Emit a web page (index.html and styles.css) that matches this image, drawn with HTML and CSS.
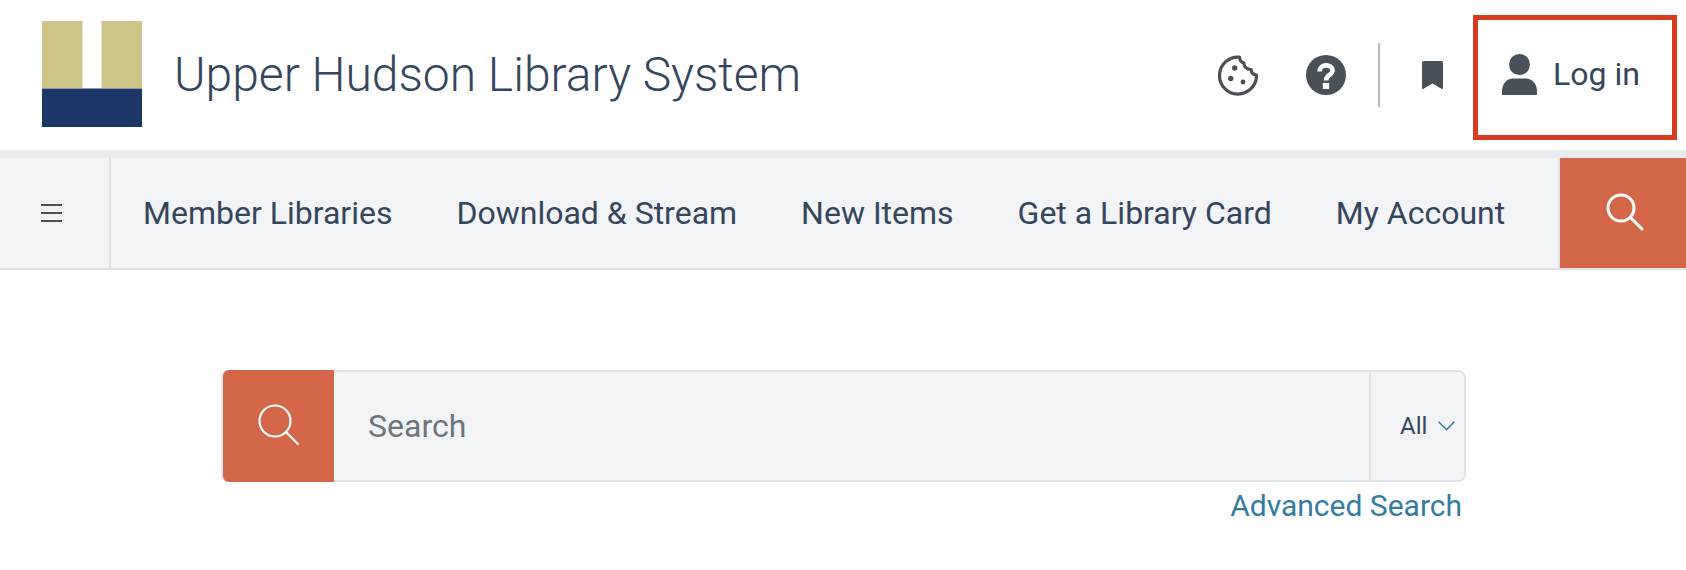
FILE: index.html
```html
<!DOCTYPE html>
<html lang="en">
<head>
    <meta charset="UTF-8">
    <meta name="viewport" content="width=device-width, initial-scale=1.0">
    <title>Upper Hudson Library System</title>
    <link rel="stylesheet" href="styles.css">
</head>
<body>
    <header class="site-header">
        <a class="brand" href="#">
            <svg class="brand-logo" viewBox="0 0 100 106" width="100" height="106" aria-hidden="true">
                <rect width="100" height="68" fill="#cdc589"/>
                <rect x="40" width="20" height="68" fill="#e6e2c4"/>
                <rect x="41" width="18" height="68" fill="#fff"/>
                <rect y="67" width="100" height="1" fill="#8f97a3"/>
                <rect y="68" width="100" height="38" fill="#1a3768"/>
            </svg>
            <span class="brand-name">Upper Hudson Library System</span>
        </a>
        <div class="header-tools">
            <a class="tool tool-cookie" href="#" aria-label="Cookies">
                <svg viewBox="0 0 40 41" width="40" height="41" aria-hidden="true">
                    <path d="M21.500 2.100A18.500 18.500 0 1 0 38.500 20C35.500 20 33.500 18 33 14.500C28.500 14.500 25.500 11 26 8C23.500 7.500 21.500 5 21.500 2.100Z" fill="none" stroke="#495057" stroke-width="3.200" stroke-linejoin="round"/>
                    <circle cx="16.700" cy="13" r="2.700" fill="#495057"/>
                    <circle cx="12.700" cy="23.500" r="2.700" fill="#495057"/>
                    <circle cx="25" cy="27" r="2.400" fill="#495057"/>
                </svg>
            </a>
            <a class="tool tool-help" href="#" aria-label="Help">
                <svg viewBox="0 0 40 40" width="40" height="40" aria-hidden="true">
                    <circle cx="20" cy="20" r="20" fill="#495057"/>
                    <path d="M13.500 16.500C13.500 8.500 26.500 8.500 26.500 15.500C26.500 20 20 20 20 25.500" fill="none" stroke="#fff" stroke-width="4.600"/>
                    <rect x="16.800" y="28" width="6.400" height="6" fill="#fff"/>
                </svg>
            </a>
            <span class="tool-divider"></span>
            <a class="tool tool-bookmark" href="#" aria-label="Saved items">
                <svg viewBox="0 0 21 28" width="21" height="28" aria-hidden="true">
                    <path d="M2 0H19A2 2 0 0 1 21 2V27Q21 28.500 19.500 27.700L10.500 22.500L1.500 27.700Q0 28.500 0 27V2A2 2 0 0 1 2 0Z" fill="#495057"/>
                </svg>
            </a>
            <a class="login" href="#">
                <svg viewBox="0 0 35 41" width="35" height="41" aria-hidden="true">
                    <circle cx="17.500" cy="10.500" r="10.500" fill="#495057"/>
                    <path d="M0 41V37C0 29 6 24.500 11 24.500H24C29 24.500 35 29 35 37V41Z" fill="#495057"/>
                </svg>
                <span>Log in</span>
            </a>
        </div>
    </header>

    <nav class="main-nav">
        <button class="nav-toggle" aria-label="Menu">
            <span></span><span></span><span></span>
        </button>
        <ul class="nav-links">
            <li><a href="#">Member Libraries</a></li>
            <li><a href="#">Download &amp; Stream</a></li>
            <li><a href="#">New Items</a></li>
            <li><a href="#">Get a Library Card</a></li>
            <li><a href="#">My Account</a></li>
        </ul>
        <button class="nav-search" aria-label="Search">
            <svg viewBox="0 0 40 40" width="40" height="40" aria-hidden="true">
                <circle cx="15" cy="15" r="13" fill="none" stroke="#fff" stroke-width="3"/>
                <path d="M24.500 24.500L36 36" stroke="#fff" stroke-width="3" stroke-linecap="round"/>
            </svg>
        </button>
    </nav>

    <section class="search-area">
        <form class="search-box">
            <button class="search-submit" type="button" aria-label="Search">
                <svg viewBox="0 0 44 44" width="44" height="44" aria-hidden="true">
                    <circle cx="17" cy="17" r="15.500" fill="none" stroke="#fff" stroke-width="2.200"/>
                    <path d="M28 28L40 40" stroke="#fff" stroke-width="2.200" stroke-linecap="round"/>
                </svg>
            </button>
            <input class="search-input" type="text" placeholder="Search">
            <div class="search-scope">
                <span>All</span>
                <svg viewBox="0 0 17 10" width="17" height="10" aria-hidden="true">
                    <path d="M0.700 0.700L8.500 8.700L16.300 0.700" fill="none" stroke="#337c9f" stroke-width="1.500"/>
                </svg>
            </div>
        </form>
        <div class="search-extra">
            <a href="#">Advanced Search</a>
        </div>
    </section>
</body>
</html>
```

FILE: styles.css
```css
body {
    margin: 0;
    font-family: Roboto, "Liberation Sans", sans-serif;
    color: #35465c;
    background-color: #fff;
    overflow: hidden;
}

a {
    color: inherit;
    text-decoration: none;
}

.site-header {
    display: flex;
    align-items: center;
    justify-content: space-between;
    height: 150px;
    padding: 0 9px 0 42px;
    border-bottom: 8px solid #e9ecef;
}

.brand {
    display: flex;
    align-items: center;
    gap: 32px;
    margin-top: -2px;
}

.brand-logo {
    display: block;
}

.brand-name {
    font-size: 48px;
    font-weight: 300;
}

.header-tools {
    display: flex;
    align-items: center;
}

.tool {
    display: flex;
}

.tool-help {
    margin-left: 48px;
}

.tool-divider {
    width: 2px;
    height: 64px;
    margin: 0 42px 0 32px;
    background-color: #b9bdc1;
}

.tool-bookmark {
    margin-right: 30px;
}

.login {
    display: flex;
    align-items: center;
    gap: 16px;
    box-sizing: border-box;
    width: 204px;
    height: 125px;
    margin-top: 5px;
    padding: 0 0 7px 24px;
    border: 5px solid #d63c1f;
    font-size: 32px;
}

.main-nav {
    display: flex;
    align-items: stretch;
    height: 110px;
    background-color: #f3f4f6;
    border-bottom: 2px solid #dee2e6;
}

.nav-toggle {
    display: flex;
    flex-direction: column;
    align-items: center;
    justify-content: center;
    gap: 6px;
    width: 111px;
    padding: 0 7px 0 0;
    border: none;
    border-right: 2px solid #dee2e6;
    background: none;
}

.nav-toggle span {
    width: 21px;
    height: 2px;
    background-color: #495057;
}

.nav-links {
    display: flex;
    flex: 1;
    align-items: center;
    gap: 64px;
    margin: 0;
    padding: 0 0 0 32px;
    list-style: none;
    font-size: 32px;
}

.nav-search {
    display: flex;
    align-items: center;
    justify-content: center;
    box-sizing: content-box;
    width: 120px;
    padding: 0 0 0 6px;
    border: none;
    border-left: 2px solid #dee2e6;
    background-color: #d4674a;
}

.search-area {
    width: 1245px;
    margin: 100px 0 0 221px;
}

.search-box {
    display: flex;
    box-sizing: border-box;
    height: 112px;
    border: 2px solid #e0e3e7;
    border-radius: 8px;
    background-color: #f3f4f6;
}

.search-submit {
    display: flex;
    align-items: center;
    justify-content: center;
    width: 111px;
    margin: -2px 0;
    padding: 0 0 0 3px;
    border: none;
    border-radius: 6px 0 0 6px;
    background-color: #d4674a;
}

.search-input {
    flex: 1;
    min-width: 0;
    padding: 0 0 0 34px;
    border: none;
    background: none;
    font-family: inherit;
    font-size: 32px;
    color: #35465c;
}

.search-input::placeholder {
    color: #6c757d;
    opacity: 1;
}

.search-scope {
    display: flex;
    align-items: center;
    gap: 11px;
    width: 95px;
    padding-left: 29px;
    box-sizing: border-box;
    border-left: 2px solid #e0e3e7;
    font-size: 24px;
}

.search-extra {
    margin-top: 6px;
    padding-right: 4px;
    text-align: right;
    font-size: 30px;
    color: #337c9f;
}
```
